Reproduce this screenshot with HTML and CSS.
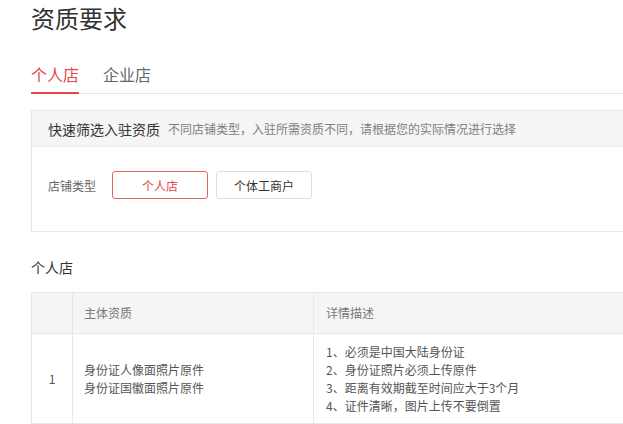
FILE: index.html
```html
<!DOCTYPE html>
<html lang="zh-CN">
<head>
  <meta charset="UTF-8" />
  <title>资质要求</title>
  <link rel="stylesheet" href="styles.css">
</head>
<body>
  <div class="page">
    <h1 class="page-title">资质要求</h1>

    <!-- Store type tabs -->
    <div class="tabs">
      <a href="#" class="tab active">个人店</a>
      <a href="#" class="tab">企业店</a>
    </div>

    <!-- Quick filter -->
    <div class="filter-box">
      <div class="filter-head">
        <span class="filter-title">快速筛选入驻资质</span>
        <span class="filter-tip">不同店铺类型，入驻所需资质不同，请根据您的实际情况进行选择</span>
      </div>
      <div class="filter-body">
        <span class="filter-label">店铺类型</span>
        <button class="type-btn selected">个人店</button>
        <button class="type-btn">个体工商户</button>
      </div>
    </div>

    <h3 class="section-title">个人店</h3>

    <table class="req-table">
      <thead>
        <tr>
          <th class="col-no"></th>
          <th class="col-name">主体资质</th>
          <th>详情描述</th>
        </tr>
      </thead>
      <tbody>
        <tr>
          <td class="col-no">1</td>
          <td class="col-name">身份证人像面照片原件<br>身份证国徽面照片原件</td>
          <td>
            1、必须是中国大陆身份证<br>
            2、身份证照片必须上传原件<br>
            3、距离有效期截至时间应大于3个月<br>
            4、证件清晰，图片上传不要倒置
          </td>
        </tr>
      </tbody>
    </table>
  </div>
</body>
</html>
```

FILE: styles.css
```css
* {
  margin: 0;
  padding: 0;
  box-sizing: border-box;
}

body {
  font-family: "Noto Sans CJK SC", "Noto Sans", sans-serif;
  color: #333;
  background: #fff;
  overflow: hidden;
}

.page {
  width: 780px;
  padding: 1px 0 0 31px;
}

.page-title {
  font-size: 24px;
  font-weight: normal;
  line-height: 34px;
  color: #333;
}

/* Tabs */
.tabs {
  display: flex;
  gap: 24px;
  margin-top: 27px;
  border-bottom: 1px solid #e5e5e5;
}

.tab {
  font-size: 16px;
  line-height: 24px;
  padding-bottom: 6px;
  color: #666;
  text-decoration: none;
  border-bottom: 2px solid transparent;
  margin-bottom: -1px;
}

.tab.active {
  color: #e5474a;
  border-bottom-color: #e5474a;
}

/* Filter box */
.filter-box {
  margin-top: 16px;
  border: 1px solid #e8e8e8;
}

.filter-head {
  height: 36px;
  padding-left: 16px;
  display: flex;
  align-items: center;
  gap: 8px;
  background: #f5f5f5;
  border-bottom: 1px solid #ebebeb;
}

.filter-title {
  font-size: 14px;
  color: #333;
}

.filter-tip {
  font-size: 12px;
  color: #808080;
}

.filter-body {
  display: flex;
  align-items: center;
  padding: 24px 16px 32px;
}

.filter-label {
  font-size: 12px;
  color: #666;
  margin-right: 16px;
}

.type-btn {
  width: 96px;
  height: 28px;
  margin-right: 8px;
  font-family: inherit;
  font-size: 12px;
  color: #333;
  background: #fff;
  border: 1px solid #ddd;
  border-radius: 3px;
  cursor: pointer;
}

.type-btn.selected {
  color: #e5474a;
  border-color: #e06466;
}

/* Requirements table */
.section-title {
  font-size: 14px;
  font-weight: normal;
  line-height: 20px;
  margin-top: 25px;
  color: #333;
}

.req-table {
  width: 100%;
  margin-top: 15px;
  border-collapse: collapse;
  font-size: 12px;
}

.req-table th,
.req-table td {
  border: 1px solid #e8e8e8;
  text-align: left;
  padding: 0 12px;
  line-height: 18px;
}

.req-table th {
  height: 41px;
  font-weight: normal;
  color: #777;
  background: #f5f5f5;
}

.req-table td {
  height: 90px;
  color: #555;
}

.req-table .col-no {
  width: 41px;
  text-align: center;
  padding: 0;
}

.req-table .col-name {
  width: 241px;
  padding-left: 11px;
}
```
